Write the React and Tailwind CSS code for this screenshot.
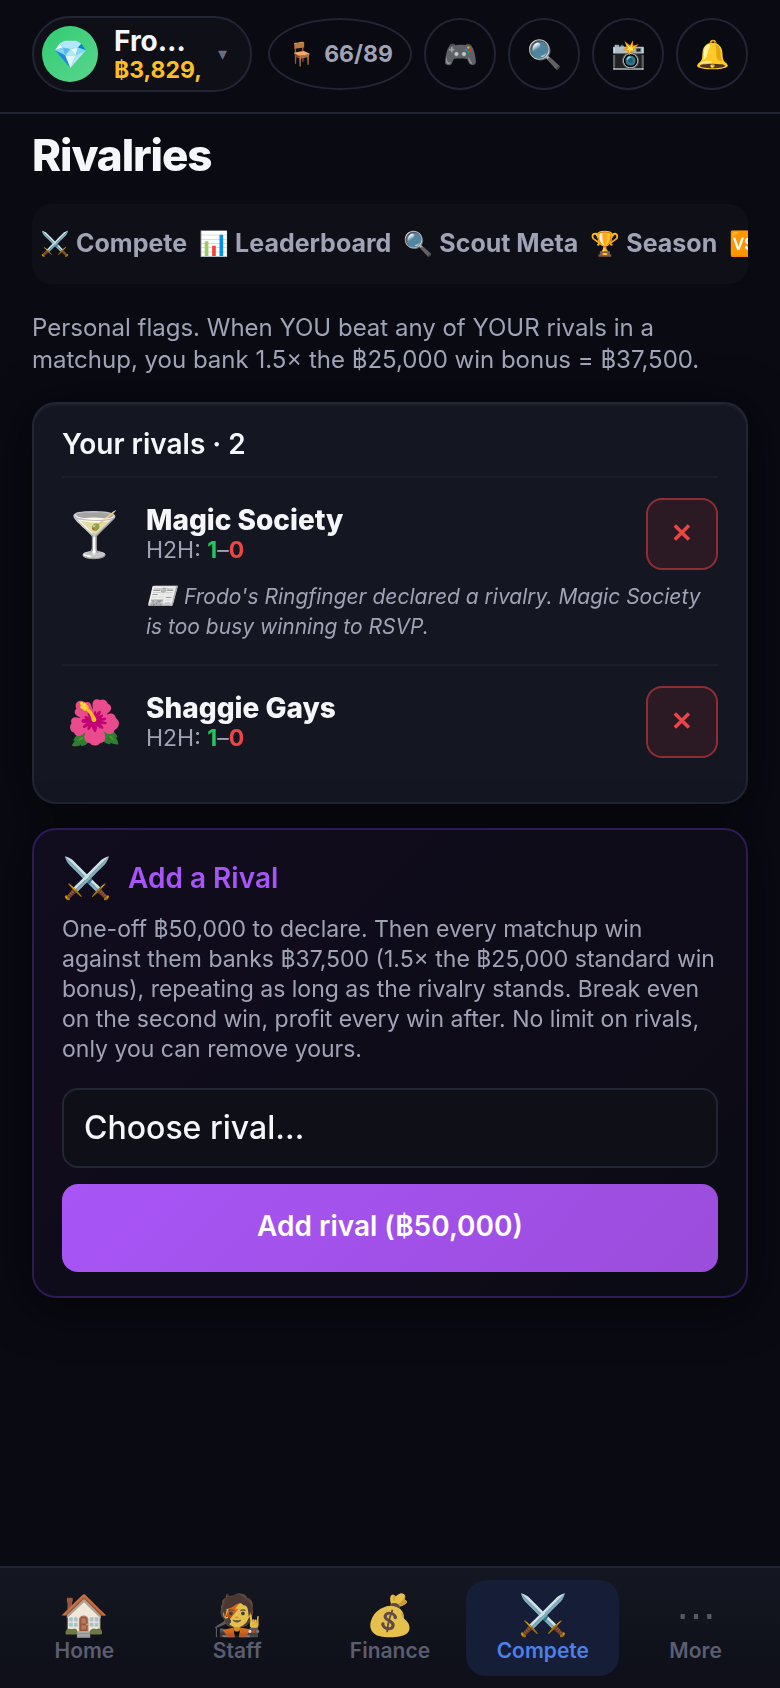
const TABS = [
  { icon: '⚔️', label: 'Compete' },
  { icon: '📊', label: 'Leaderboard' },
  { icon: '🔍', label: 'Scout Meta' },
  { icon: '🏆', label: 'Season' },
  { icon: '🆚', label: '' },
]

const ACTIONS = [
  { icon: '🎮', label: 'Games' },
  { icon: '🔍', label: 'Search' },
  { icon: '📸', label: 'Snapshot' },
  { icon: '🔔', label: 'Notifications' },
]

const RIVALS = [
  {
    icon: '🍸',
    name: 'Magic Society',
    wins: 1,
    losses: 0,
    note: "Frodo's Ringfinger declared a rivalry. Magic Society is too busy winning to RSVP.",
  },
  { icon: '🌺', name: 'Shaggie Gays', wins: 1, losses: 0 },
]

const NAV = [
  { icon: '🏠', label: 'Home' },
  { icon: '🧑‍🎤', label: 'Staff' },
  { icon: '💰', label: 'Finance' },
  { icon: '⚔️', label: 'Compete', active: true },
  { icon: '⋯', label: 'More' },
]

const Header = () => {
  return (
    <header className="flex items-start gap-4 border-b-2 border-[#222534] px-8 pt-4 pb-5">
      <button className="flex min-w-0 flex-1 items-center gap-4 rounded-full border-2 border-[#222534] bg-[#0f0f18] px-2 py-[7px] text-left">
        <span className="flex size-14 shrink-0 items-center justify-center rounded-full bg-linear-135 from-[#2ecc71] to-[#58d68d] text-[28px]">
          💎
        </span>
        <span className="min-w-0">
          <span className="block text-[28px] leading-8 font-bold text-[#f5f6fa]">Fro…</span>
          <span className="block text-[23px] leading-[26px] font-bold text-[#fbbf24]">฿3,829,</span>
        </span>
        <span className="text-lg text-[#6b6d80]">▾</span>
      </button>
      <div className="flex gap-3 pt-0.5">
        <button className="flex h-18 w-36 items-center justify-center gap-2 rounded-[50%] border-2 border-[#222534] text-[23px] font-bold text-[#a0a3b5]">
          <span>🪑</span> 66/89
        </button>
        {ACTIONS.map((a) => (
          <button
            key={a.label}
            aria-label={a.label}
            className="flex size-18 items-center justify-center rounded-full border-2 border-[#222534] text-[28px]"
          >
            {a.icon}
          </button>
        ))}
      </div>
    </header>
  )
}

const Tabs = () => {
  return (
    <div className="mt-6 flex h-20 items-center gap-3 overflow-x-auto rounded-[20px] bg-[#0f0f18] px-2 text-[25px] font-bold whitespace-nowrap text-[#a0a3b5] [scrollbar-width:none]">
      {TABS.map((t) => (
        <button key={t.icon} className="flex shrink-0 items-center gap-1.5">
          <span className="text-2xl">{t.icon}</span>
          {t.label}
        </button>
      ))}
    </div>
  )
}

const RivalRow = ({ rival }) => {
  return (
    <li className="border-t-2 border-[#1c1f2b] py-5">
      <div className="flex items-center gap-5">
        <span className="w-16 shrink-0 text-center text-[44px] leading-12">{rival.icon}</span>
        <div className="min-w-0 flex-1">
          <h3 className="text-[28px] leading-8 font-extrabold text-[#f5f6fa]">{rival.name}</h3>
          <p className="text-[23px] leading-7 text-[#a0a3b5]">
            H2H: <b className="font-bold text-[#22c55e]">{rival.wins}</b>–
            <b className="font-bold text-[#ef4444]">{rival.losses}</b>
          </p>
        </div>
        <button
          aria-label={`Remove ${rival.name}`}
          className="size-18 shrink-0 rounded-2xl border-2 border-[#8f2d34] bg-[#2b1a24] pb-1 text-[26px] font-bold text-[#ef4444]"
        >
          ✕
        </button>
      </div>
      {rival.note && (
        <p className="mt-3 pb-0.5 pl-21 text-[21px] leading-[30px] text-[#a0a3b5] italic">
          <span className="mr-2 text-2xl leading-none">📰</span>
          {rival.note}
        </p>
      )}
    </li>
  )
}

const RivalsCard = () => {
  return (
    <section className="mt-[26px] rounded-3xl border-2 border-[#222534] bg-[#141721] px-7 py-6 shadow-[0_8px_48px_rgba(0,0,0,0.5),inset_0_2px_0_rgba(255,255,255,0.03)]">
      <h2 className="pb-4 text-[28px] leading-8 font-semibold text-[#f5f6fa]">Your rivals · 2</h2>
      <ul>
        {RIVALS.map((r) => (
          <RivalRow key={r.name} rival={r} />
        ))}
      </ul>
    </section>
  )
}

const AddRivalCard = () => {
  return (
    <section className="mt-6 rounded-3xl border-2 border-[#2e1a55] bg-linear-135 from-[#110c1e] to-[#0b0b14] px-7 py-6 shadow-[0_8px_48px_rgba(0,0,0,0.5)]">
      <div className="flex items-center gap-4">
        <span className="text-[40px] leading-12">⚔️</span>
        <h2 className="text-[28px] leading-8 font-semibold text-[#a855f7]">Add a Rival</h2>
      </div>
      <p className="mt-3 text-[23px] leading-[30px] text-[#a0a3b5]">
        One-off ฿50,000 to declare. Then every matchup win against them banks ฿37,500 (1.5× the
        ฿25,000 standard win bonus), repeating as long as the rivalry stands. Break even on the
        second win, profit every win after. No limit on rivals, only you can remove yours.
      </p>
      <select
        aria-label="Choose rival"
        className="mt-6 block h-20 w-full appearance-none rounded-2xl border-2 border-[#222534] bg-[#0f0f18] px-5 text-[32px] font-medium text-[#f5f6fa]"
      >
        <option>Choose rival…</option>
      </select>
      <button className="mt-4 h-22 w-full rounded-2xl bg-linear-135 from-[#a855f7] to-[#9b4ddb] pb-1 text-[28px] font-semibold text-white">
        Add rival (฿50,000)
      </button>
    </section>
  )
}

const BottomNav = () => {
  return (
    <nav className="sticky bottom-0 flex border-t-2 border-[#222534] bg-linear-to-b from-[#141721] to-[#0e0f18] px-2 py-3">
      {NAV.map((n) => (
        <a
          key={n.label}
          href="#"
          className={
            n.active
              ? 'flex h-24 flex-1 flex-col items-center justify-center gap-0.5 rounded-[20px] bg-[#151e36] text-[#4f7fe8]'
              : 'flex h-24 flex-1 flex-col items-center justify-center gap-0.5 text-[#5b5d70]'
          }
        >
          <span
            className={
              n.active ? 'text-[40px] leading-11' : 'text-[40px] leading-11 opacity-95 grayscale-25'
            }
          >
            {n.icon}
          </span>
          <span className="text-[21px] leading-6 font-semibold">{n.label}</span>
        </a>
      ))}
    </nav>
  )
}

const App = () => {
  return (
    <div className="flex min-h-screen flex-col bg-[#090a12] font-['Inter','Noto_Sans',sans-serif]">
      <Header />
      <main className="flex-1 px-8 pt-4">
        <h1 className="text-[44px] leading-[50px] font-extrabold tracking-tight text-[#f5f6fa]">Rivalries</h1>
        <Tabs />
        <p className="mt-7 text-2xl leading-8 text-[#a0a3b5]">
          Personal flags. When YOU beat any of YOUR rivals in a matchup, you bank 1.5× the ฿25,000
          win bonus = ฿37,500.
        </p>
        <RivalsCard />
        <AddRivalCard />
      </main>
      <BottomNav />
    </div>
  )
}

export default App
